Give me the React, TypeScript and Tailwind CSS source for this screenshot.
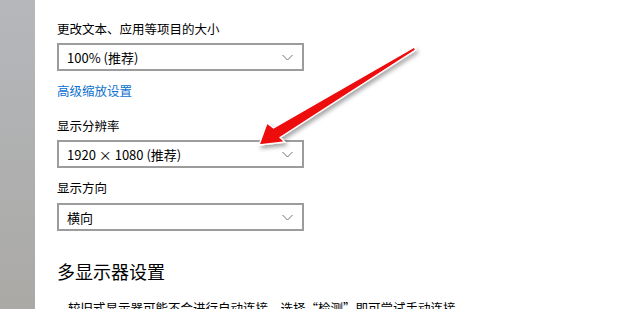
const font = { fontFamily: '"Noto Sans CJK SC", "Noto Sans", sans-serif' };

function Select({ value }: { value: string }) {
  return (
    <div className="flex h-[28px] w-[247px] items-center justify-between border-2 border-[#9c9c9c] bg-white pl-[8px] pr-[9px]">
      <span className="text-[13px] leading-none text-black">{value}</span>
      <svg width="11" height="7" viewBox="0 0 11 7" className="text-[#707070]">
        <polyline points="0.5,1 5.5,6 10.5,1" fill="none" stroke="currentColor" strokeWidth="1" />
      </svg>
    </div>
  );
}

function Arrow() {
  // tip (260,145) -> tail (414,49)
  return (
    <svg
      className="pointer-events-none absolute left-0 top-0"
      width="620"
      height="309"
      viewBox="0 0 620 309"
    >
      <defs>
        <filter id="sh" x="-20%" y="-20%" width="140%" height="140%">
          <feDropShadow dx="2" dy="3" stdDeviation="2" floodColor="#000" floodOpacity="0.35" />
        </filter>
      </defs>
      <polygon
        points="259,145 267,123 273.5,128 414.5,47 415.5,50 280,137.5 285,142"
        fill="#ee0a0f"
        stroke="#ffffff"
        strokeWidth="1.4"
        strokeLinejoin="round"
        filter="url(#sh)"
      />
    </svg>
  );
}

export default function App() {
  return (
    <div className="relative flex h-[309px] w-[620px] overflow-hidden bg-white" style={font}>
      {/* grey strip on the left */}
      <div className="h-full w-[35px] shrink-0 bg-gradient-to-b from-[#b5b7bb] to-[#aaa9a6]" />

      <div className="flex flex-col pl-[22px] pt-[20px]">
        <div className="h-[18px] text-[12.5px] leading-[18px] text-black">更改文本、应用等项目的大小</div>
        <div className="mt-[5px]">
          <Select value="100% (推荐)" />
        </div>
        <div className="mt-[11px] h-[18px] text-[12.5px] leading-[18px] text-[#0a6fd0]">高级缩放设置</div>

        <div className="mt-[17px] h-[18px] text-[12.5px] leading-[18px] text-black">显示分辨率</div>
        <div className="mt-[5px]">
          <Select value="1920 × 1080 (推荐)" />
        </div>

        <div className="mt-[11px] h-[18px] text-[12.5px] leading-[18px] text-black">显示方向</div>
        <div className="mt-[6px]">
          <Select value="横向" />
        </div>

        <div className="mt-[28px] h-[24px] text-[18px] leading-[24px] text-black">多显示器设置</div>
        <div className="mt-[16px] whitespace-nowrap pl-[11px] text-[12.5px] leading-[18px] text-black">
          较旧式显示器可能不会进行自动连接。选择“检测”即可尝试手动连接。
        </div>
      </div>

      <Arrow />
    </div>
  );
}
